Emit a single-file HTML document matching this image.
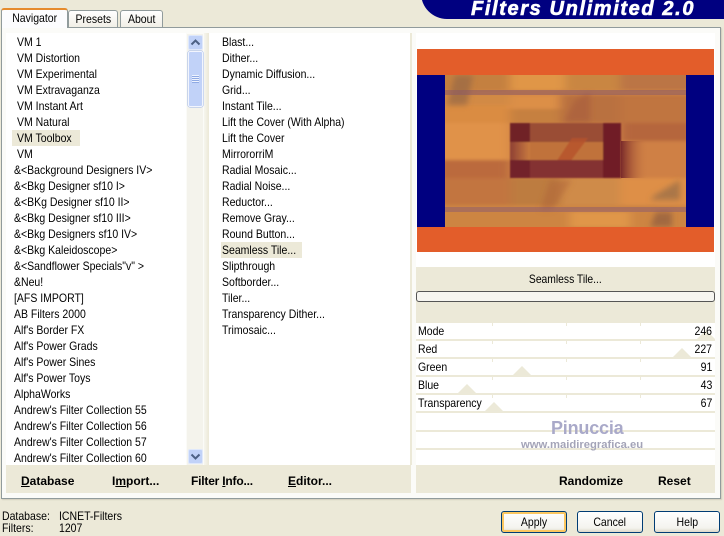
<!DOCTYPE html>
<html><head><meta charset="utf-8"><style>
html,body{margin:0;padding:0}
body{width:724px;height:536px;overflow:hidden;position:relative;background:#ece9d8;font:12px/16px "Liberation Sans",sans-serif;color:#000}
div{position:absolute;box-sizing:border-box}
.t{white-space:nowrap;height:16px;transform:scaleX(.875);transform-origin:left center}
.r{transform-origin:right center}
.s{display:inline-block;transform:scaleX(.875);transform-origin:center}
.tab{border:1px solid #919b9c;border-bottom:0;border-radius:3px 3px 0 0;background:linear-gradient(#fff,#f1efe6);text-align:center}
.b{font-weight:bold;white-space:nowrap;height:16px;top:473px}
.sep{left:416px;width:299px;height:2px;background:#ece9d8}
.tri{width:0;height:0;border-left:9px solid transparent;border-right:9px solid transparent;border-bottom:9px solid #ece9d8}
.tk{width:1px;height:3px;background:#ece9d8}
.btn{top:511px;width:66px;height:22px;border:1px solid #003c74;border-radius:3px;background:linear-gradient(#fff,#f4f3ee 80%,#dcd8c8);text-align:center;line-height:20px}
u{text-decoration:underline}
</style></head><body>
<div style="left:421px;top:-30px;width:320px;height:49px;background:#000080;border-radius:0 0 0 26px"></div>
<div style="left:471px;top:-2px;height:22px;line-height:22px;white-space:nowrap;font-size:20px;font-weight:bold;font-style:italic;color:#fff;letter-spacing:1.62px;-webkit-text-stroke:.6px #fff">Filters Unlimited 2.0</div>

<div style="left:1px;top:27px;width:720px;height:472px;background:#fbfbf8;border:1px solid #919b9c;box-shadow:1px 1px 1px #d0cdbd"></div>
<div style="left:6px;top:33px;width:180px;height:432px;background:#fff"></div>
<div style="left:209px;top:33px;width:201px;height:432px;background:#fff"></div>
<div style="left:416px;top:33px;width:299px;height:432px;background:#fff"></div>
<div class="tab" style="left:1px;top:8px;width:67px;height:20px;background:#fcfcfe;border-top:2px solid #e68b2c;border-bottom:0;line-height:17px;z-index:2"><span class="s">Navigator</span></div>
<div class="tab" style="left:68px;top:10px;width:50px;height:17px;line-height:17px"><span class="s">Presets</span></div>
<div class="tab" style="left:120px;top:10px;width:43px;height:17px;line-height:17px"><span class="s">About</span></div>

<div style="left:204px;top:33px;width:5px;height:432px;background:linear-gradient(90deg,#f6f5ee,#ece9d8)"></div>
<div style="left:410px;top:33px;width:2px;height:432px;background:#ece9d8"></div>

<div style="left:12px;top:130px;width:68px;height:16px;background:#ece9d8"></div>
<div style="left:221px;top:242px;width:81px;height:16px;background:#ece9d8"></div>

<div style="left:0;top:0;width:186px;height:465px;overflow:hidden">
<div class="t" style="left:17px;top:34px">VM 1</div>
<div class="t" style="left:17px;top:50px">VM Distortion</div>
<div class="t" style="left:17px;top:66px">VM Experimental</div>
<div class="t" style="left:17px;top:82px">VM Extravaganza</div>
<div class="t" style="left:17px;top:98px">VM Instant Art</div>
<div class="t" style="left:17px;top:114px">VM Natural</div>
<div class="t" style="left:17px;top:130px">VM Toolbox</div>
<div class="t" style="left:17px;top:146px">VM</div>
<div class="t" style="left:14px;top:162px">&amp;&lt;Background Designers IV&gt;</div>
<div class="t" style="left:14px;top:178px">&amp;&lt;Bkg Designer sf10 I&gt;</div>
<div class="t" style="left:14px;top:194px">&amp;&lt;BKg Designer sf10 II&gt;</div>
<div class="t" style="left:14px;top:210px">&amp;&lt;Bkg Designer sf10 III&gt;</div>
<div class="t" style="left:14px;top:226px">&amp;&lt;Bkg Designers sf10 IV&gt;</div>
<div class="t" style="left:14px;top:242px">&amp;&lt;Bkg Kaleidoscope&gt;</div>
<div class="t" style="left:14px;top:258px">&amp;&lt;Sandflower Specials"v" &gt;</div>
<div class="t" style="left:14px;top:274px">&amp;Neu!</div>
<div class="t" style="left:14px;top:290px">[AFS IMPORT]</div>
<div class="t" style="left:14px;top:306px">AB Filters 2000</div>
<div class="t" style="left:14px;top:322px">Alf's Border FX</div>
<div class="t" style="left:14px;top:338px">Alf's Power Grads</div>
<div class="t" style="left:14px;top:354px">Alf's Power Sines</div>
<div class="t" style="left:14px;top:370px">Alf's Power Toys</div>
<div class="t" style="left:14px;top:386px">AlphaWorks</div>
<div class="t" style="left:14px;top:402px">Andrew's Filter Collection 55</div>
<div class="t" style="left:14px;top:418px">Andrew's Filter Collection 56</div>
<div class="t" style="left:14px;top:434px">Andrew's Filter Collection 57</div>
<div class="t" style="left:14px;top:450px">Andrew's Filter Collection 60</div>
</div>

<div style="left:187px;top:34px;width:16px;height:431px;background:#f4f3ec"></div>
<div style="left:188px;top:35px;width:15px;height:15px;background:#c1d2f8;border-radius:2px;border:1px solid #dfe8fb"></div>
<svg style="position:absolute;left:188px;top:35px" width="15" height="15"><path d="M3.5 9.5L7.5 5.5L11.5 9.5" fill="none" stroke="#4d6185" stroke-width="2"/></svg>
<div style="left:188px;top:51px;width:15px;height:56px;background:#c1d2f8;border:1px solid #f2f5fe;border-radius:2px;box-shadow:0 0 0 .5px #9db5e8"></div>
<div style="left:192px;top:75px;width:7px;height:8px;background:repeating-linear-gradient(#eef3fe 0 1px,#8faae4 1px 2px)"></div>
<div style="left:188px;top:449px;width:15px;height:15px;background:#c1d2f8;border-radius:2px;border:1px solid #dfe8fb"></div>
<svg style="position:absolute;left:188px;top:449px" width="15" height="15"><path d="M3.5 5.5L7.5 9.5L11.5 5.5" fill="none" stroke="#4d6185" stroke-width="2"/></svg>

<div class="t" style="left:222px;top:34px">Blast...</div>
<div class="t" style="left:222px;top:50px">Dither...</div>
<div class="t" style="left:222px;top:66px">Dynamic Diffusion...</div>
<div class="t" style="left:222px;top:82px">Grid...</div>
<div class="t" style="left:222px;top:98px">Instant Tile...</div>
<div class="t" style="left:222px;top:114px">Lift the Cover (With Alpha)</div>
<div class="t" style="left:222px;top:130px">Lift the Cover</div>
<div class="t" style="left:222px;top:146px">MirrororriM</div>
<div class="t" style="left:222px;top:162px">Radial Mosaic...</div>
<div class="t" style="left:222px;top:178px">Radial Noise...</div>
<div class="t" style="left:222px;top:194px">Reductor...</div>
<div class="t" style="left:222px;top:210px">Remove Gray...</div>
<div class="t" style="left:222px;top:226px">Round Button...</div>
<div class="t" style="left:222px;top:242px">Seamless Tile...</div>
<div class="t" style="left:222px;top:258px">Slipthrough</div>
<div class="t" style="left:222px;top:274px">Softborder...</div>
<div class="t" style="left:222px;top:290px">Tiler...</div>
<div class="t" style="left:222px;top:306px">Transparency Dither...</div>
<div class="t" style="left:222px;top:322px">Trimosaic...</div>

<svg style="position:absolute;left:417px;top:49px" width="297" height="203" viewBox="417 49 297 203">
<defs>
<filter id="f" x="-5%" y="-5%" width="110%" height="110%"><feGaussianBlur stdDeviation="5 1.5"/></filter>
<filter id="g"><feGaussianBlur stdDeviation="3"/></filter>
<filter id="h" x="-5%" y="-5%" width="110%" height="110%"><feGaussianBlur stdDeviation=".7"/></filter>
<clipPath id="c"><rect x="445" y="75" width="241" height="152"/></clipPath>
<linearGradient id="l1" x1="0" x2="1"><stop offset="0" stop-color="#7a2a2a"/><stop offset="1" stop-color="#cf8045" stop-opacity="0"/></linearGradient>
<linearGradient id="l2" x1="0" x2="1"><stop offset="0" stop-color="#8e4034"/><stop offset="1" stop-color="#c87a3f"/></linearGradient>
</defs>
<rect x="417" y="49" width="297" height="203" fill="#e35d2a"/>
<rect x="417" y="75" width="297" height="152" fill="#000080"/>
<g clip-path="url(#c)">
<rect x="445" y="75" width="241" height="152" fill="#d08545"/>
<g filter="url(#f)">
<rect x="435" y="70" width="75" height="20" fill="#c4803f"/>
<rect x="510" y="70" width="55" height="20" fill="#e09647"/>
<rect x="565" y="70" width="55" height="20" fill="#c98643"/>
<rect x="620" y="70" width="76" height="20" fill="#bb7444"/>
<rect x="435" y="95" width="75" height="10" fill="#d28a45"/>
<rect x="435" y="105" width="75" height="18" fill="#da8c42"/>
<rect x="510" y="95" width="50" height="14" fill="#dc8f46"/>
<rect x="510" y="109" width="50" height="14" fill="#c6803f"/>
<rect x="560" y="95" width="60" height="28" fill="#b9713f"/>
<rect x="620" y="95" width="76" height="28" fill="#c07540"/>
<rect x="435" y="123" width="75" height="37" fill="#e0924a"/>
<rect x="435" y="160" width="75" height="18" fill="#bb6b3e"/>
<rect x="621" y="123" width="75" height="18" fill="#b5663c"/>
<rect x="621" y="141" width="75" height="37" fill="#cf8045"/>
<rect x="435" y="178" width="75" height="27" fill="#c2753f"/>
<rect x="510" y="178" width="50" height="27" fill="#bd7b40"/>
<rect x="560" y="178" width="60" height="27" fill="#cf8b4a"/>
<rect x="620" y="178" width="76" height="27" fill="#de8f46"/>
<rect x="435" y="205" width="261" height="27" fill="#cd8542"/>
<rect x="570" y="212" width="60" height="15" fill="#e09648"/>
</g>
<g filter="url(#g)">
<path d="M455 75h18l-6 30h-20z" fill="#9d6b45" opacity=".8"/>
<path d="M655 195l25-15v20h-30z" fill="#9d7048" opacity=".8"/>
<path d="M650 227l6-15h16v15z" fill="#8f5c3f" opacity=".7"/>
<path d="M575 100l15-8v30h-26z" fill="#a65a3c" opacity=".6"/>
<path d="M540 210l10-30h22l-20 30z" fill="#ae6239" opacity=".5"/>
</g>
<g filter="url(#h)">
<rect x="530" y="123" width="73" height="19" fill="#9a4d34"/>
<rect x="510" y="142" width="93" height="18" fill="#c0723a"/>
<rect x="510" y="142" width="20" height="18" fill="url(#l2)"/>
<path d="M556 162l16-24h16l-18 24z" fill="#b5522c" opacity=".8"/>
<rect x="510" y="123" width="20" height="19" fill="#6f2026"/>
<rect x="510" y="160" width="93" height="18" fill="#843230"/>
<rect x="510" y="160" width="20" height="18" fill="#72242a"/>
<rect x="603" y="123" width="18" height="55" fill="#701f26"/>
</g>
<rect x="621" y="141" width="28" height="37" fill="url(#l1)"/>
<rect x="445" y="90" width="241" height="5" fill="#8a5a66" opacity=".55"/>
<rect x="445" y="207" width="241" height="5" fill="#8a5a70" opacity=".5"/>
</g>
</svg>

<div style="left:416px;top:267px;width:299px;height:56px;background:#ece9d8"></div>
<div style="left:416px;top:271px;width:299px;height:16px;text-align:center;white-space:nowrap"><span class="s" style="transform:scaleX(.86)">Seamless Tile...</span></div>
<div style="left:416px;top:291px;width:299px;height:11px;background:#f6f5f0;border:1px solid #555;border-radius:3px"></div>

<div class="sep" style="top:339px"></div>
<div class="sep" style="top:357px"></div>
<div class="sep" style="top:375px"></div>
<div class="sep" style="top:393px"></div>
<div class="sep" style="top:411px"></div>
<div class="sep" style="top:430px"></div>
<div class="sep" style="top:448px"></div>
<div class="tri" style="left:697px;top:330px"></div>
<div class="tri" style="left:673px;top:348px"></div>
<div class="tri" style="left:513px;top:366px"></div>
<div class="tri" style="left:458px;top:384px"></div>
<div class="tri" style="left:485px;top:402px"></div>
<div class="tk" style="left:492px;top:323px"></div><div class="tk" style="left:566px;top:323px"></div><div class="tk" style="left:640px;top:323px"></div>
<div class="tk" style="left:492px;top:341px"></div><div class="tk" style="left:566px;top:341px"></div><div class="tk" style="left:640px;top:341px"></div>
<div class="tk" style="left:492px;top:359px"></div><div class="tk" style="left:566px;top:359px"></div><div class="tk" style="left:640px;top:359px"></div>
<div class="tk" style="left:492px;top:377px"></div><div class="tk" style="left:566px;top:377px"></div><div class="tk" style="left:640px;top:377px"></div>
<div class="tk" style="left:492px;top:395px"></div><div class="tk" style="left:566px;top:395px"></div><div class="tk" style="left:640px;top:395px"></div>

<div class="t" style="left:418px;top:323px">Mode</div><div class="t r" style="right:12px;top:323px">246</div>
<div class="t" style="left:418px;top:341px">Red</div><div class="t r" style="right:12px;top:341px">227</div>
<div class="t" style="left:418px;top:359px">Green</div><div class="t r" style="right:12px;top:359px">91</div>
<div class="t" style="left:418px;top:377px">Blue</div><div class="t r" style="right:12px;top:377px">43</div>
<div class="t" style="left:418px;top:395px">Transparency</div><div class="t r" style="right:12px;top:395px">67</div>

<div style="left:551px;top:417px;height:22px;line-height:22px;white-space:nowrap;font-size:18px;font-weight:bold;color:#a9a9c9;letter-spacing:-.2px">Pinuccia</div>
<div style="left:521px;top:437px;height:16px;white-space:nowrap;font-size:11.25px;font-weight:bold;color:#a4a4b8">www.maidiregrafica.eu</div>

<div style="left:6px;top:465px;width:405px;height:28px;background:#ece9d8"></div>
<div style="left:416px;top:465px;width:299px;height:28px;background:#ece9d8"></div>
<div class="b" style="left:21px"><u>D</u>atabase</div>
<div class="b" style="left:112px">I<u>m</u>port...</div>
<div class="b" style="left:191px;letter-spacing:-.2px">Filter <u>I</u>nfo...</div>
<div class="b" style="left:288px"><u>E</u>ditor...</div>
<div class="b" style="left:559px">Randomize</div>
<div class="b" style="left:658px">Reset</div>

<div class="t" style="left:2px;top:508px">Database:</div>
<div class="t" style="left:59px;top:508px">ICNET-Filters</div>
<div class="t" style="left:2px;top:520px">Filters:</div>
<div class="t" style="left:59px;top:520px">1207</div>

<div class="btn" style="left:501px;box-shadow:inset 0 0 0 2px #fbc761"><span class="s">Apply</span></div>
<div class="btn" style="left:577px"><span class="s">Cancel</span></div>
<div class="btn" style="left:654px"><span class="s">Help</span></div>
</body></html>
